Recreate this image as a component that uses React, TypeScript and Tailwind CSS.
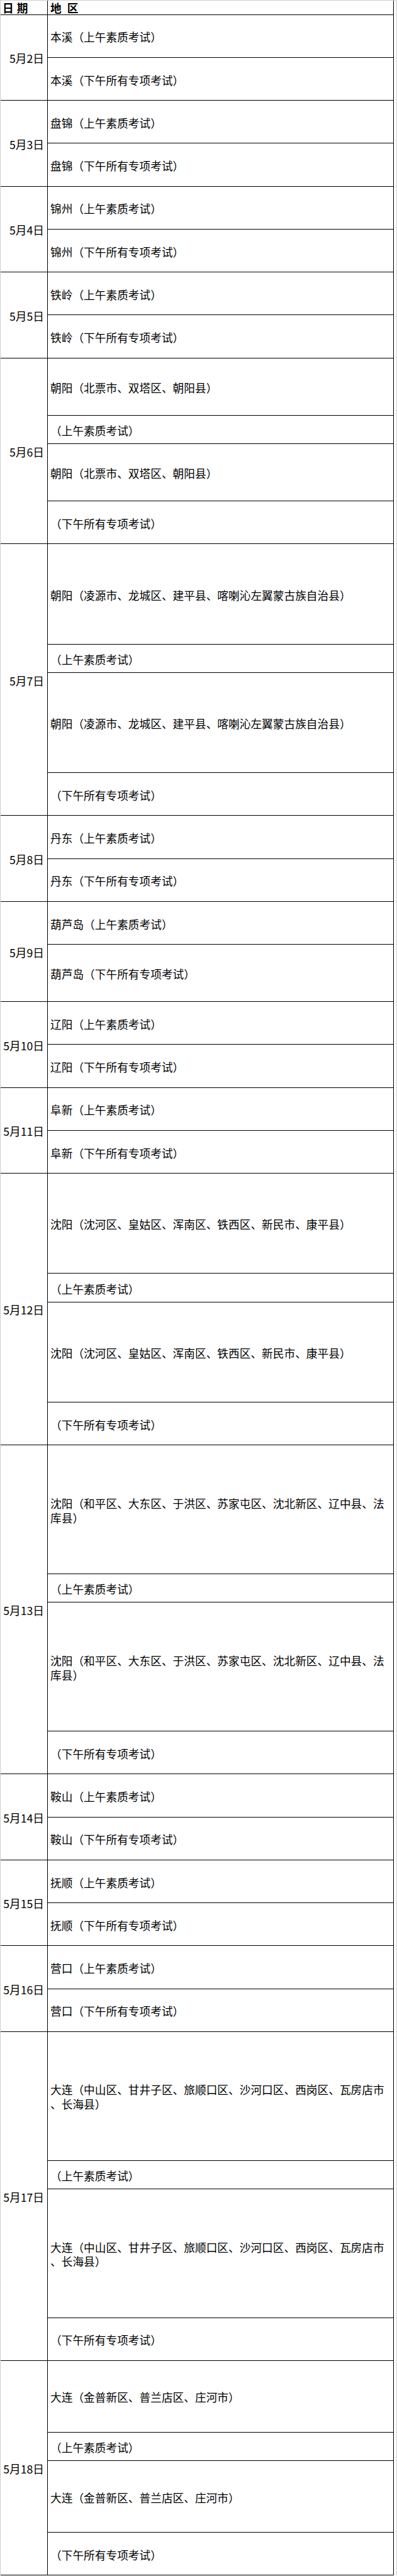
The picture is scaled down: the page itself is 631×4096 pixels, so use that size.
const heights: Record<number, string> = {
  46: 'h-[45.49px]',
  69: 'h-[68.24px]',
  92: 'h-[90.99px]',
  115: 'h-[113.74px]',
  161: 'h-[159.23px]',
  207: 'h-[204.72px]',
};

type Row = [number, string[]];
type Group = { date: string; rows: Row[] };

const AM = '（上午素质考试）';
const PM = '（下午所有专项考试）';

function pair(city: string, second = 69): Row[] {
  return [
    [69, [city + AM]],
    [second, [city + PM]],
  ];
}

function quad(top: number, region: string[]): Row[] {
  return [
    [top, region],
    [46, [AM]],
    [top, region],
    [69, [PM]],
  ];
}

const groups: Group[] = [
  { date: '5月2日', rows: pair('本溪') },
  { date: '5月3日', rows: pair('盘锦') },
  { date: '5月4日', rows: pair('锦州') },
  { date: '5月5日', rows: pair('铁岭') },
  { date: '5月6日', rows: quad(92, ['朝阳（北票市、双塔区、朝阳县）']) },
  { date: '5月7日', rows: quad(161, ['朝阳（凌源市、龙城区、建平县、喀喇沁左翼蒙古族自治县）']) },
  { date: '5月8日', rows: pair('丹东') },
  { date: '5月9日', rows: pair('葫芦岛', 92) },
  { date: '5月10日', rows: pair('辽阳') },
  { date: '5月11日', rows: pair('阜新') },
  { date: '5月12日', rows: quad(161, ['沈阳（沈河区、皇姑区、浑南区、铁西区、新民市、康平县）']) },
  {
    date: '5月13日',
    rows: quad(207, ['沈阳（和平区、大东区、于洪区、苏家屯区、沈北新区、辽中县、法', '库县）']),
  },
  { date: '5月14日', rows: pair('鞍山') },
  { date: '5月15日', rows: pair('抚顺') },
  { date: '5月16日', rows: pair('营口') },
  {
    date: '5月17日',
    rows: quad(207, ['大连（中山区、甘井子区、旅顺口区、沙河口区、西岗区、瓦房店市', '、长海县）']),
  },
  { date: '5月18日', rows: quad(115, ['大连（金普新区、普兰店区、庄河市）']) },
];

export default function App() {
  return (
    <div
      className="w-[631px] bg-white border-x border-t border-[#cfcfcf] text-black text-[17.7px]"
      style={{ fontFamily: '"Noto Sans CJK SC", "Noto Sans", sans-serif' }}
    >
      <div className="w-[625px] border-r border-black">
        {/* header */}
        <div className="flex h-[22.75px] border-b border-black font-bold leading-[22px]">
          <div className="w-[75px] shrink-0 border-r border-black flex items-center pl-[3px]">
            <span>日</span>
            <span className="ml-[5px]">期</span>
          </div>
          <div className="flex-1 flex items-center pl-[4px]">
            <span>地</span>
            <span className="ml-[9px]">区</span>
          </div>
        </div>

        {groups.map(g => (
          <div key={g.date} className="flex">
            <div className="w-[75px] shrink-0 border-r border-b border-black flex items-center justify-end pr-[5px] pt-[2px] whitespace-nowrap">
              {g.date}
            </div>
            <div className="flex-1 flex flex-col">
              {g.rows.map(([h, lines], i) => (
                <div
                  key={i}
                  className={`${heights[h]} border-b border-black flex flex-col justify-center pl-[4px] pt-[3px] leading-[22.75px] whitespace-nowrap`}
                >
                  {lines.map((t, j) => (
                    <div key={j}>{t}</div>
                  ))}
                </div>
              ))}
            </div>
          </div>
        ))}
      </div>
    </div>
  );
}
